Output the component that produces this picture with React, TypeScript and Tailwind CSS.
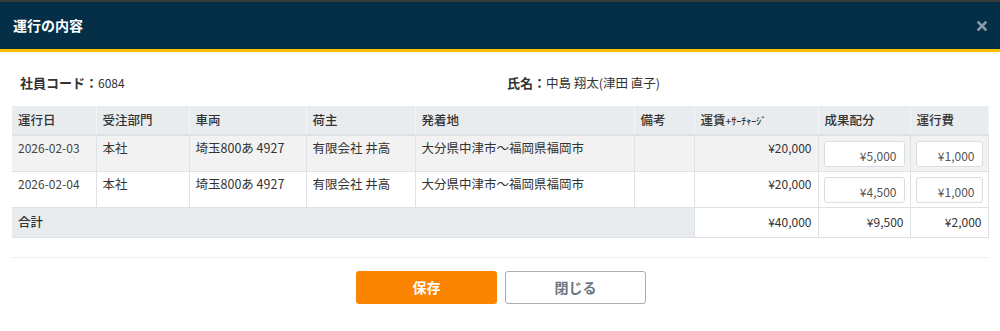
import React from "react";

type Trip = {
  date: string;
  dept: string;
  vehicle: string;
  shipper: string;
  route: string;
  note: string;
  fare: string;
  share: string;
  cost: string;
};

const trips: Trip[] = [
  {
    date: "2026-02-03",
    dept: "本社",
    vehicle: "埼玉800あ 4927",
    shipper: "有限会社 井高",
    route: "大分県中津市〜福岡県福岡市",
    note: "",
    fare: "¥20,000",
    share: "¥5,000",
    cost: "¥1,000",
  },
  {
    date: "2026-02-04",
    dept: "本社",
    vehicle: "埼玉800あ 4927",
    shipper: "有限会社 井高",
    route: "大分県中津市〜福岡県福岡市",
    note: "",
    fare: "¥20,000",
    share: "¥4,500",
    cost: "¥1,000",
  },
];

const cols = [
  { label: "運行日", w: "w-[84px]" },
  { label: "受注部門", w: "w-[93px]" },
  { label: "車両", w: "w-[117px]" },
  { label: "荷主", w: "w-[109px]" },
  { label: "発着地", w: "w-[219px]" },
  { label: "備考", w: "w-[60px]" },
  { label: "運賃+ｻｰﾁｬｰｼﾞ", w: "w-[124px]" },
  { label: "成果配分", w: "w-[92px]" },
  { label: "運行費", w: "w-[78px]" },
];

export default function App() {
  const font = "font-['Noto_Sans_CJK_JP','Noto_Sans',sans-serif]";
  return (
    <div className={`w-[1000px] h-[331px] bg-white text-[#333] ${font}`}>
      <div className="h-[2px] bg-[#3b3b3b]" />
      {/* header */}
      <div className="h-[47px] bg-[#042f47] border-b-[3px] border-[#f6bf00] box-content flex items-center justify-between px-[13px]">
        <h1 className="text-white text-[14px] font-bold">運行の内容</h1>
        <svg viewBox="0 0 10 10" className="w-[10px] h-[10px] mr-[0px]">
          <path d="M1.5 1.5 L8.5 8.5 M8.5 1.5 L1.5 8.5" stroke="#8a9ba8" strokeWidth="2.6" strokeLinecap="square" />
        </svg>
      </div>

      <div className="px-[12px]">
        <div className="flex pt-[21px] h-[54px] text-[12px]">
          <div className="w-[495px] pl-[8px]">
            <span className="font-bold text-[13px]">社員コード：</span>6084
          </div>
          <div>
            <span className="font-bold text-[13px]">氏名：</span>
            <span className="text-[12.5px]">中島 翔太(津田 直子)</span>
          </div>
        </div>

        <table className="w-[976px] border-collapse table-fixed text-[12.5px]">
          <thead>
            <tr className="h-[29px] bg-[#e9ecef] border-b-2 border-[#dee2e6]">
              {cols.map((c) => (
                <th
                  key={c.label}
                  className={`${c.w} text-left font-medium px-[6px] border-x border-[#f3f4f6] first:border-l-0`}
                >
                  {c.label === "運賃+ｻｰﾁｬｰｼﾞ" ? (
                    <span>
                      運賃<span className="text-[10px]">+ｻｰﾁｬｰｼﾞ</span>
                    </span>
                  ) : (
                    c.label
                  )}
                </th>
              ))}
            </tr>
          </thead>
          <tbody>
            {trips.map((t, i) => (
              <tr
                key={t.date}
                className={`h-[36px] border-b border-[#dee2e6] align-top ${
                  i % 2 === 0 ? "bg-[#f2f2f2]" : "bg-white"
                }`}
              >
                <td className="px-[6px] pt-[3px] text-[12px] text-[#444]">{t.date}</td>
                <td className="px-[6px] pt-[3px] border-l border-[#dee2e6]">{t.dept}</td>
                <td className="px-[6px] pt-[3px] border-l border-[#dee2e6]">{t.vehicle}</td>
                <td className="px-[6px] pt-[3px] border-l border-[#dee2e6]">{t.shipper}</td>
                <td className="px-[6px] pt-[3px] border-l border-[#dee2e6]">{t.route}</td>
                <td className="px-[6px] pt-[3px] border-l border-[#dee2e6]">{t.note}</td>
                <td className="px-[6px] pt-[3px] border-l border-[#dee2e6] text-right text-[12px]">
                  {t.fare}
                </td>
                <td className="px-[5px] pt-[5px] border-l border-[#dee2e6]">
                  <input
                    defaultValue={t.share}
                    className="w-full h-[26px] bg-white border border-[#dcdcdc] rounded-[3px] px-[7px] pt-[3px] text-right text-[12px] text-[#555] outline-none"
                  />
                </td>
                <td className="px-[5px] pt-[5px] border-x border-[#dee2e6]">
                  <input
                    defaultValue={t.cost}
                    className="w-full h-[26px] bg-white border border-[#dcdcdc] rounded-[3px] px-[7px] pt-[3px] text-right text-[12px] text-[#555] outline-none"
                  />
                </td>
              </tr>
            ))}
            <tr className="h-[30px] border-b border-[#dee2e6]">
              <td colSpan={6} className="bg-[#e9ecef] px-[6px] font-medium">
                合計
              </td>
              <td className="px-[6px] text-right text-[12px] border-l border-[#dee2e6]">¥40,000</td>
              <td className="px-[6px] text-right text-[12px] border-l border-[#dee2e6]">¥9,500</td>
              <td className="px-[6px] text-right text-[12px] border-x border-[#dee2e6]">¥2,000</td>
            </tr>
          </tbody>
        </table>

        <div className="mt-[19px] border-t border-[#eeeeee]" />

        <div className="flex justify-center gap-[8px] pt-[13px] pl-[2px]">
          <button className="w-[141px] h-[33px] rounded-[3px] bg-[#fb8500] text-white text-[14px] font-bold">
            保存
          </button>
          <button className="w-[141px] h-[33px] rounded-[3px] bg-white border border-[#a9aeb4] text-[#6c757d] text-[14px] font-bold">
            閉じる
          </button>
        </div>
      </div>
    </div>
  );
}
